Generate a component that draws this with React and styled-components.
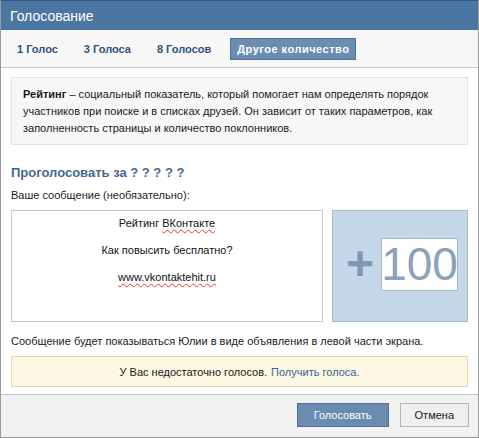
import React from 'react'
import styled, { createGlobalStyle } from 'styled-components'

const GlobalStyle = createGlobalStyle`
  html, body {
    margin: 0;
    padding: 0;
    background: #fff;
  }
  body {
    font-family: 'Liberation Sans', Tahoma, Arial, sans-serif;
    font-size: 11px;
    color: #000;
  }
`

const Dialog = styled.div`
  width: 479px;
  height: 438px;
  box-sizing: border-box;
  display: flex;
  flex-direction: column;
  border: 1px solid #9a9a9a;
  border-top: none;
  background: #fff;
`

const Header = styled.div`
  height: 30px;
  box-sizing: border-box;
  background: #4b76a1;
  border-top: 1px solid #2f5782;
  color: #fff;
  font-size: 14px;
  display: flex;
  align-items: center;
  padding-left: 9px;
`

const TabBar = styled.div`
  height: 38px;
  box-sizing: border-box;
  background: #f7f7f7;
  border-bottom: 1px solid #c9c9c9;
  display: flex;
  align-items: center;
  gap: 12px;
  padding-left: 9px;
`

const Tab = styled.div`
  padding: 4px 6px;
  font-weight: bold;
  letter-spacing: ${p => (p.$active ? '0.5px' : '0')};
  color: ${p => (p.$active ? '#fff' : '#2f5479')};
  background: ${p => (p.$active ? '#6b8db2' : 'transparent')};
  border: 1px solid ${p => (p.$active ? '#4e719a' : 'transparent')};
`

const Body = styled.div`
  flex: 1;
  padding: 9px 10px 0;
  display: flex;
  flex-direction: column;
`

const InfoBox = styled.div`
  background: #f7f7f7;
  border: 1px solid #e2e2e2;
  padding: 8px 11px 7px;
  line-height: 17px;
  color: #1a1a1a;
`

const Heading = styled.div`
  margin-top: 20px;
  font-size: 13px;
  font-weight: bold;
  color: #45688e;
`

const Label = styled.div`
  margin-top: 9px;
  color: #1a1a1a;
`

const Row = styled.div`
  margin-top: 9px;
  display: flex;
  gap: 9px;
  height: 112px;
`

const MessageBox = styled.div`
  width: 312px;
  box-sizing: border-box;
  border: 1px solid #c8c8c8;
  background: #fff;
  display: flex;
  flex-direction: column;
  align-items: center;
  padding-top: 4px;
  gap: 11px;
  color: #111;
  line-height: 16px;
`

const Spell = styled.span`
  text-decoration: underline wavy #e33;
  text-decoration-thickness: 1px;
  text-underline-offset: 2px;
`

const VoteBox = styled.div`
  flex: 1;
  box-sizing: border-box;
  border: 1px solid #a7b8c9;
  background: #c5d7e8;
  display: flex;
  align-items: center;
  justify-content: center;
  gap: 7px;
  padding-bottom: 4px;
  padding-left: 4px;
`

const Plus = styled.span`
  font-size: 48px;
  font-weight: bold;
  color: #7d98b2;
  line-height: 1;
`

const Amount = styled.div`
  background: #fff;
  border: 1px solid #a7b8c9;
  width: 77px;
  height: 53px;
  box-sizing: border-box;
  display: flex;
  align-items: center;
  justify-content: center;
  font-size: 46px;
  color: #8aa2ba;
`

const Note = styled.div`
  margin-top: 13px;
  color: #1a1a1a;
`

const Warning = styled.div`
  margin-top: 9px;
  height: 31px;
  box-sizing: border-box;
  background: #fbf7e2;
  border: 1px solid #e2d9a6;
  display: flex;
  align-items: center;
  justify-content: center;
  color: #1a1a1a;
`

const Link = styled.span`
  color: #3b6592;
  margin-left: 4px;
`

const Footer = styled.div`
  height: 43px;
  box-sizing: border-box;
  background: #f2f2f2;
  border-top: 1px solid #c4c4c4;
  display: flex;
  align-items: center;
  justify-content: flex-end;
  gap: 11px;
  padding-right: 9px;
  padding-bottom: 2px;
`

const Button = styled.div`
  height: 24px;
  box-sizing: border-box;
  padding: 0 ${p => (p.$primary ? 16 : 14)}px;
  display: flex;
  align-items: center;
  border: 1px solid ${p => (p.$primary ? '#4f729a' : '#b4b4b4')};
  background: ${p => (p.$primary ? '#6a8cb1' : '#efefef')};
  color: ${p => (p.$primary ? '#fff' : '#222')};
`

const tabs = ['1 Голос', '3 Голоса', '8 Голосов', 'Другое количество']

export default function App() {
  return (
    <>
      <GlobalStyle />
      <Dialog>
        <Header>Голосование</Header>
        <TabBar>
          {tabs.map((t, i) => (
            <Tab key={t} $active={i === tabs.length - 1}>
              {t}
            </Tab>
          ))}
        </TabBar>
        <Body>
          <InfoBox>
            <b>Рейтинг</b> – социальный показатель, который помогает нам определять порядок
            участников при поиске и в списках друзей. Он зависит от таких параметров, как
            заполненность страницы и количество поклонников.
          </InfoBox>
          <Heading>Проголосовать за ? ? ? ? ?</Heading>
          <Label>Ваше сообщение (необязательно):</Label>
          <Row>
            <MessageBox>
              <div>
                Рейтинг <Spell>ВКонтакте</Spell>
              </div>
              <div>Как повысить бесплатно?</div>
              <div>
                <Spell>www.vkontaktehit.ru</Spell>
              </div>
            </MessageBox>
            <VoteBox>
              <Plus>+</Plus>
              <Amount>100</Amount>
            </VoteBox>
          </Row>
          <Note>Сообщение будет показываться Юлии в виде объявления в левой части экрана.</Note>
          <Warning>
            У Вас недостаточно голосов.<Link>Получить голоса.</Link>
          </Warning>
        </Body>
        <Footer>
          <Button $primary>Голосовать</Button>
          <Button>Отмена</Button>
        </Footer>
      </Dialog>
    </>
  )
}
